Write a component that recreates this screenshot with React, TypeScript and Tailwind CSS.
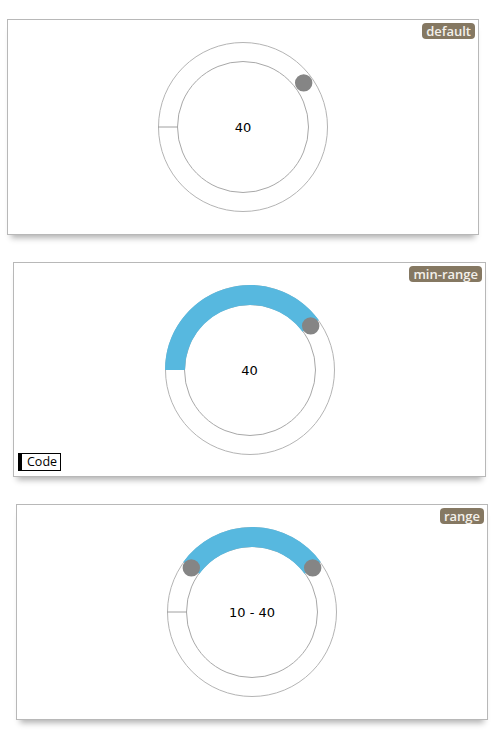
import React from 'react';

const CX = 86;
const CY = 86;
const TRACK_R = 75;

// value 0..100 maps clockwise from the 9 o'clock position
const pointAt = (value: number, r: number = TRACK_R) => {
  const phi = (value * 3.6 * Math.PI) / 180;
  return { x: CX - r * Math.cos(phi), y: CY - r * Math.sin(phi) };
};

const arcPath = (from: number, to: number) => {
  const a = pointAt(from);
  const b = pointAt(to);
  const large = (to - from) * 3.6 > 180 ? 1 : 0;
  return `M ${a.x} ${a.y} A ${TRACK_R} ${TRACK_R} 0 ${large} 1 ${b.x} ${b.y}`;
};

interface RoundSliderProps {
  range?: [number, number];
  handles: number[];
  showStart?: boolean;
  children: React.ReactNode;
}

const RoundSlider: React.FC<RoundSliderProps> = ({ range, handles, showStart = true, children }) => (
  <div className="relative w-[172px] h-[172px]">
    <svg width="172" height="172" viewBox="0 0 172 172" className="block">
      <circle cx={CX} cy={CY} r={84.5} fill="none" stroke="#b4b4b4" strokeWidth="1" />
      <circle cx={CX} cy={CY} r={65.5} fill="none" stroke="#a8a8a8" strokeWidth="1" />
      {showStart && (
        <line x1={CX - 85} y1={CY} x2={CX - 65} y2={CY} stroke="#a0a0a0" strokeWidth="1" />
      )}
      {range && (
        <path d={arcPath(range[0], range[1])} fill="none" stroke="#57b8df" strokeWidth="20" />
      )}
      {handles.map((v) => {
        const p = pointAt(v);
        return <circle key={v} cx={p.x} cy={p.y} r={8.7} fill="#858585" />;
      })}
    </svg>
    <div className="absolute inset-0 pt-[2px] flex items-center justify-center whitespace-pre text-[13px] text-black font-['DejaVu_Sans',sans-serif]">
      {children}
    </div>
  </div>
);

const Badge: React.FC<{ text: string }> = ({ text }) => (
  <span className="absolute top-[3px] right-[3px] h-4 px-[4px] flex items-center rounded-[4px] bg-[#857862] text-[#f3f0ea] text-[13px] font-semibold leading-none font-['Open_Sans',sans-serif]">
    {text}
  </span>
);

const cardClass =
  'relative h-[216px] border border-[#b8b8b8] bg-white shadow-[0_7px_6px_-4px_rgba(0,0,0,0.3)] flex items-center justify-center';

export default function App() {
  return (
    <div className="w-[500px] min-h-[740px] bg-white pt-[19px] flex flex-col gap-[27px]">
      <div className={`${cardClass} ml-[7px] w-[472px]`}>
        <Badge text="default" />
        <RoundSlider handles={[40]}>40</RoundSlider>
      </div>

      <div className="relative ml-[13px] w-[473px] h-[215px] border border-[#b8b8b8] bg-white shadow-[0_7px_6px_-4px_rgba(0,0,0,0.3)] flex items-center justify-center">
        <Badge text="min-range" />
        <RoundSlider range={[0, 40]} handles={[40]} showStart={false}>
          40
        </RoundSlider>
        <button className="absolute left-[4px] bottom-[5px] h-[18px] pl-[5px] pr-[3px] flex items-center border border-black border-l-[4px] bg-white text-[12.5px] text-black leading-none font-['Open_Sans',sans-serif]">
          Code
        </button>
      </div>

      <div className={`${cardClass} ml-[16px] w-[472px]`}>
        <Badge text="range" />
        <RoundSlider range={[10, 40]} handles={[10, 40]}>
          {'10 - 40'}
        </RoundSlider>
      </div>
    </div>
  );
}
